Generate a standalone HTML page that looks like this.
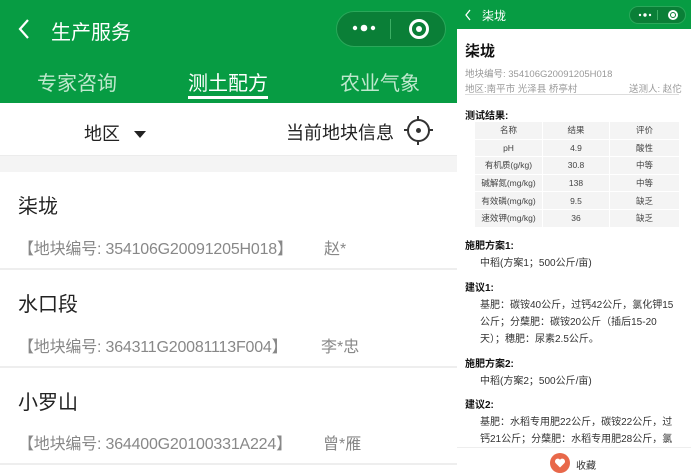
<!DOCTYPE html>
<html><head><meta charset="utf-8"><style>
*{margin:0;padding:0;box-sizing:border-box}
body{width:691px;height:475px;overflow:hidden;background:#fff;position:relative;font-family:"Liberation Sans","Noto Sans CJK SC",sans-serif}
.a{position:absolute;white-space:nowrap}
.g{background:#079c43}
.cap{position:absolute;border-radius:20px;background:#0a7f37;border:1px solid #2aa85a}
td{border:1px solid #fff;text-align:center;font-size:8.5px;color:#444;height:17.6px;background:#f4f4f4}
.b{font-weight:bold;color:#111}
.p{padding-left:15px;width:210px;white-space:normal}
</style></head><body>
<!-- LEFT -->
<div class="a g" style="left:0;top:0;width:457px;height:103px"></div>
<svg class="a" style="left:16px;top:18px" width="16" height="22" viewBox="0 0 16 22"><path d="M12 2 L4 11 L12 20" fill="none" stroke="#fff" stroke-width="2.2"/></svg>
<div class="a" style="left:51px;top:16px;color:#fff;font-size:20px">生产服务</div>
<div class="cap" style="left:336px;top:11px;width:110px;height:36px"></div>
<svg class="a" style="left:352px;top:23px" width="24" height="10"><circle cx="3" cy="5" r="2.2" fill="#fff"/><circle cx="12" cy="5" r="3.3" fill="#fff"/><circle cx="21" cy="5" r="2.2" fill="#fff"/></svg>
<div class="a" style="left:390px;top:19px;width:1px;height:20px;background:#3cae64"></div>
<div class="a" style="left:409px;top:19px;width:20px;height:20px;border:3px solid #fff;border-radius:50%"></div>
<div class="a" style="left:416px;top:26px;width:6px;height:6px;background:#fff;border-radius:50%"></div>
<div class="a" style="left:37px;top:67px;color:#bfe8cd;font-size:20px">专家咨询</div>
<div class="a" style="left:188px;top:67px;color:#fff;font-size:20px">测土配方</div>
<div class="a" style="left:188px;top:96px;width:80px;height:3px;background:#fff"></div>
<div class="a" style="left:340px;top:67px;color:#bfe8cd;font-size:20px">农业气象</div>
<div class="a" style="left:84px;top:120px;font-size:18px;color:#222">地区</div>
<div class="a" style="left:134px;top:131px;border-left:6px solid transparent;border-right:6px solid transparent;border-top:7px solid #222"></div>
<div class="a" style="left:286px;top:119px;font-size:18px;color:#222">当前地块信息</div>
<div class="a" style="left:407px;top:119px;width:23px;height:23px;border:2px solid #333;border-radius:50%"></div>
<div class="a" style="left:416px;top:128px;width:5px;height:5px;background:#333;border-radius:50%"></div>
<div class="a" style="left:404px;top:129px;width:5px;height:2px;background:#333"></div>
<div class="a" style="left:428px;top:129px;width:5px;height:2px;background:#333"></div>
<div class="a" style="left:417px;top:116px;width:2px;height:5px;background:#333"></div>
<div class="a" style="left:417px;top:140px;width:2px;height:5px;background:#333"></div>
<div class="a" style="left:0;top:155px;width:457px;height:17px;background:#f4f4f4;border-top:1px solid #ececec"></div>
<div class="a" style="left:18px;top:190px;font-size:20px;color:#222">柒垅</div>
<div class="a" style="left:18px;top:235px;font-size:16px;color:#888;letter-spacing:-0.2px">【地块编号: 354106G20091205H018】</div>
<div class="a" style="left:324px;top:235px;font-size:16px;color:#888">赵*</div>
<div class="a" style="left:0;top:268px;width:457px;height:2px;background:#eee"></div>
<div class="a" style="left:18px;top:288px;font-size:20px;color:#222">水口段</div>
<div class="a" style="left:18px;top:333px;font-size:16px;color:#888;letter-spacing:-0.2px">【地块编号: 364311G20081113F004】</div>
<div class="a" style="left:321px;top:333px;font-size:16px;color:#888">李*忠</div>
<div class="a" style="left:0;top:366px;width:457px;height:2px;background:#eee"></div>
<div class="a" style="left:18px;top:386px;font-size:20px;color:#222">小罗山</div>
<div class="a" style="left:18px;top:430px;font-size:16px;color:#888;letter-spacing:-0.2px">【地块编号: 364400G20100331A224】</div>
<div class="a" style="left:323px;top:430px;font-size:16px;color:#888">曾*雁</div>
<div class="a" style="left:0;top:463px;width:457px;height:2px;background:#eee"></div>
<!-- RIGHT -->
<div class="a" style="left:457px;top:0;width:234px;height:475px;background:#fff"></div>
<div class="a g" style="left:457px;top:0;width:234px;height:29px"></div>
<svg class="a" style="left:464px;top:9px" width="8" height="12" viewBox="0 0 8 12"><path d="M6 1 L2 6 L6 11" fill="none" stroke="#fff" stroke-width="1.3"/></svg>
<div class="a" style="left:482px;top:7px;color:#fff;font-size:12px">柒垅</div>
<div class="cap" style="left:629px;top:6px;width:57px;height:18px"></div>
<svg class="a" style="left:638px;top:12px" width="14" height="6"><circle cx="2" cy="3" r="1.2" fill="#fff"/><circle cx="7" cy="3" r="1.7" fill="#fff"/><circle cx="12" cy="3" r="1.2" fill="#fff"/></svg>
<div class="a" style="left:657px;top:10px;width:1px;height:10px;background:#3cae64"></div>
<div class="a" style="left:668px;top:10px;width:10px;height:10px;border:2px solid #fff;border-radius:50%"></div>
<div class="a" style="left:671px;top:13px;width:4px;height:4px;background:#fff;border-radius:50%"></div>
<div class="a" style="left:465px;top:40px;font-size:15px;font-weight:bold;color:#111">柒垅</div>
<div class="a" style="left:465px;top:66px;font-size:9.5px;color:#999">地块编号: 354106G20091205H018</div>
<div class="a" style="left:465px;top:81px;font-size:9.5px;color:#999">地区:南平市 光泽县 桥亭村</div>
<div class="a" style="left:629px;top:81px;font-size:9.5px;color:#999">送测人: 赵佗</div>
<div class="a" style="left:465px;top:94px;width:214px;height:1px;background:#ddd"></div>
<div class="a b" style="left:465px;top:107px;font-size:10px">测试结果:</div>
<table class="a" style="left:474px;top:121px;width:206px;border-collapse:collapse">
<tr><td style="width:68px">名称</td><td style="width:67px">结果</td><td>评价</td></tr>
<tr><td>pH</td><td>4.9</td><td>酸性</td></tr>
<tr><td>有机质(g/kg)</td><td>30.8</td><td>中等</td></tr>
<tr><td>碱解氮(mg/kg)</td><td>138</td><td>中等</td></tr>
<tr><td>有效磷(mg/kg)</td><td>9.5</td><td>缺乏</td></tr>
<tr><td>速效钾(mg/kg)</td><td>36</td><td>缺乏</td></tr>
</table>
<div style="position:absolute;left:465px;top:238px;width:226px;font-size:10px;color:#333;line-height:17px">
<div class="b">施肥方案1:</div>
<div class="p">中稻(方案1；500公斤/亩)</div>
<div class="b" style="margin-top:8px">建议1:</div>
<div class="p">基肥：碳铵40公斤，过钙42公斤，氯化钾15公斤；分蘖肥：碳铵20公斤（插后15-20天）；穗肥：尿素2.5公斤。</div>
<div class="b" style="margin-top:8px">施肥方案2:</div>
<div class="p">中稻(方案2；500公斤/亩)</div>
<div class="b" style="margin-top:7px">建议2:</div>
<div class="p">基肥：水稻专用肥22公斤，碳铵22公斤，过钙21公斤；分蘖肥：水稻专用肥28公斤，氯化钾</div>
</div>
<div class="a" style="left:457px;top:447px;width:234px;height:28px;background:#fff;border-top:1px solid #eee"></div>
<div class="a" style="left:550px;top:453px;width:20px;height:20px;border-radius:50%;background:#e8684a"></div>
<svg class="a" style="left:554px;top:457px" width="12" height="12" viewBox="0 0 12 12"><path d="M6 10.5 L1.5 6 A2.4 2.4 0 0 1 6 2.8 A2.4 2.4 0 0 1 10.5 6 Z" fill="#fff"/></svg>
<div class="a" style="left:576px;top:457px;font-size:10px;color:#333">收藏</div>
</body></html>
